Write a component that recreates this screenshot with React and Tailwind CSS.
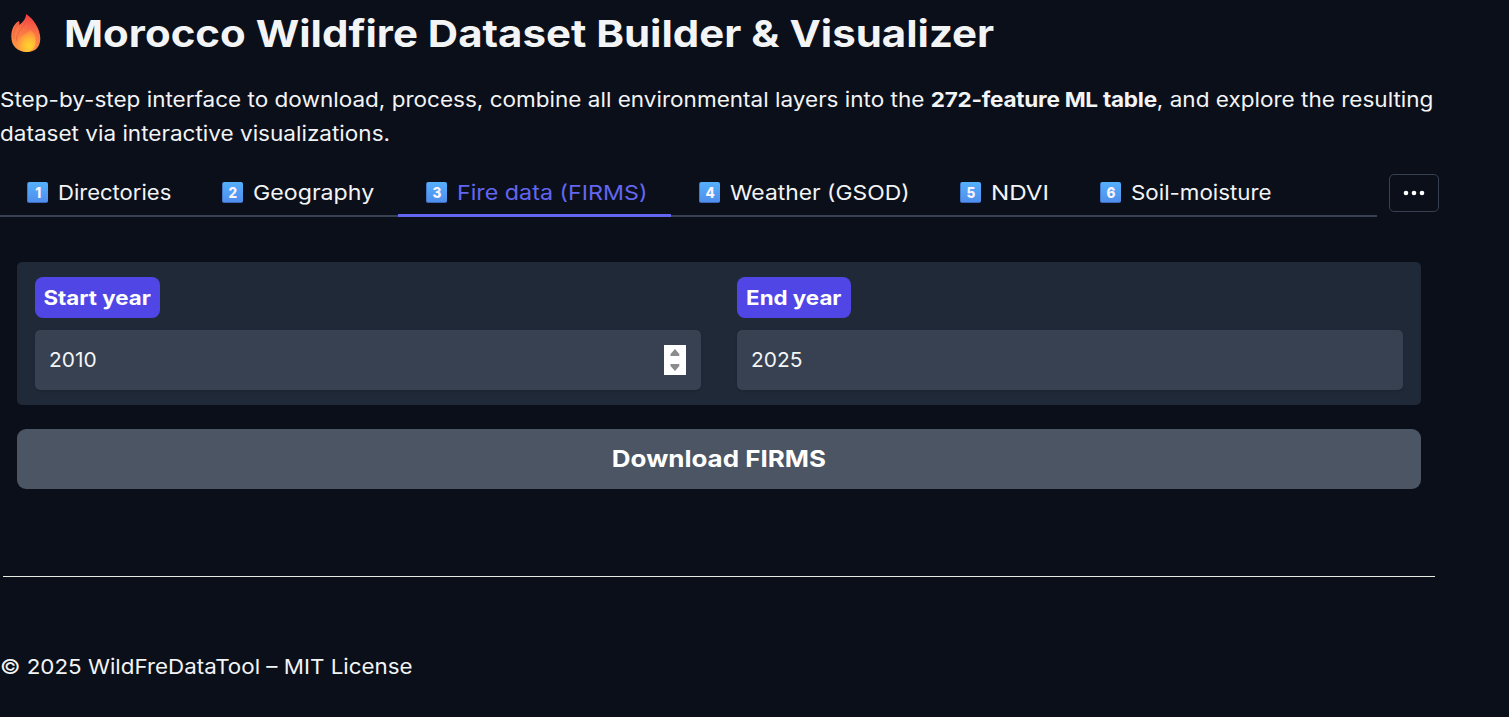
const tabs = [
  { n: '1', label: 'Directories', width: 'w-[195px]', text: 'scale-x-[1.075]' },
  { n: '2', label: 'Geography', width: 'w-[203px]', text: 'scale-x-[1.130]' },
  { n: '3', label: 'Fire data (FIRMS)', width: 'w-[273px]', text: 'scale-x-[1.135]', active: true },
  { n: '4', label: 'Weather (GSOD)', width: 'w-[261px]', text: 'scale-x-[1.115]' },
  { n: '5', label: 'NDVI', width: 'w-[140px]', text: 'scale-x-[1.180]' },
  { n: '6', label: 'Soil-moisture', width: 'w-[304px]', text: 'scale-x-[1.090]' },
];

function Flame() {
  return (
    <svg width="30" height="39" viewBox="0 0 30 39" className="mt-[14px] ml-[11px] shrink-0">
      <defs>
        <linearGradient id="flameOuter" x1="0.6" y1="0" x2="0.4" y2="1">
          <stop offset="0" stopColor="#f03a45" />
          <stop offset="0.45" stopColor="#fb7445" />
          <stop offset="1" stopColor="#fd9a45" />
        </linearGradient>
        <radialGradient id="flameInner" cx="0.65" cy="0.75" r="0.7">
          <stop offset="0" stopColor="#ffd52e" />
          <stop offset="0.5" stopColor="#ffb735" />
          <stop offset="1" stopColor="#ff8741" />
        </radialGradient>
      </defs>
      <path d="M15.2 0C22 4.500 29.300 14.500 29.300 24.500C29.300 33 24 38 16.500 38C7 38 0.300 32.500 0.300 22.500C0.300 15.500 3 9.500 8 7C8.600 8.700 8.500 9.500 8.300 11C12.500 8 15 4 15.200 0Z" fill="url(#flameOuter)" />
      <path d="M8 9C4 13 2.200 18 3.200 25M14.500 8C12.500 14 5.500 17.500 5.200 27" fill="none" stroke="#d9563b" strokeWidth="0.9" opacity="0.6" />
      <path d="M19 16C23 18 25 22.500 24.800 27C24.500 34 20.500 38 15.500 38C9.500 38 5.800 34 6 29.500C6.300 24 9.500 22.500 13 20.500C16 18.800 18.500 18 19 16Z" fill="url(#flameInner)" />
    </svg>
  );
}

function Keycap({ n }) {
  return (
    <span className="flex h-[21px] w-[21px] shrink-0 items-center justify-center rounded-[2px] border-b border-l border-b-[#4268bd] border-l-[#4379cb] bg-linear-to-b from-[#55b0fb] to-[#4f8fed] text-[15px] leading-none font-extrabold text-[#fbf4ff]">
      <span className="scale-x-90">{n}</span>
    </span>
  );
}

function Spinner() {
  return (
    <svg width="22" height="30" viewBox="0 0 22 30" className="bg-white">
      <path d="M11 4L15.300 9V11H6.500V9Z M11 26L15.300 21V19H6.500V21Z" fill="#8b8b8b" />
    </svg>
  );
}

function YearField({ label, value, spinner, labelClass }) {
  return (
    <div className="flex flex-1 flex-col items-start gap-3">
      <label className={`flex h-[41px] items-center justify-center rounded-lg bg-[#4f46e5] text-[20px] font-bold whitespace-nowrap text-white ${labelClass}`}>
        <span className="scale-x-[1.115]">{label}</span>
      </label>
      <div className="flex h-[60px] w-full items-center justify-between rounded-[5px] bg-[#374151] pr-[15px] pl-[14px] text-[20.500px] text-[#f3f4f6] shadow-sm">
        <span className="origin-left scale-x-[1.020]">{value}</span>
        {spinner && <Spinner />}
      </div>
    </div>
  );
}

export default function App() {
  return (
    <div className="h-[717px] w-full overflow-hidden bg-[#0b0f19] font-['Inter',sans-serif] text-[20.500px] text-[#f3f4f6]">
      <header className="flex h-[66px]">
        <Flame />
        <h1 className="ml-[23px] origin-left scale-x-[1.119] text-[37.500px] leading-[67px] font-bold whitespace-nowrap">
          Morocco Wildfire Dataset Builder &amp; Visualizer
        </h1>
      </header>
      <p className="h-[108px] origin-left scale-x-[1.099] pt-[17px] leading-[34px] whitespace-nowrap">
        Step-by-step interface to download, process, combine all environmental layers into the{' '}
        <strong className="font-bold tracking-[-0.230px]">272-feature ML table</strong>, and explore the resulting
        <br />
        dataset via interactive visualizations.
      </p>
      <div className="flex h-[43px]">
        <nav className="flex w-[1377px] border-b-2 border-[#374151]">
          {tabs.map((t) => (
            <button
              key={t.n}
              className={`flex h-[43px] shrink-0 items-center gap-[10px] whitespace-nowrap ${t.width} ${t.active ? 'border-b-3 border-[#6366f1] pb-[3px] pl-[28px] text-[#6366f1]' : t.n > '3' ? 'pb-[6px] pl-[28px]' : 'pb-[6px] pl-[27px]'}`}
            >
              <Keycap n={t.n} />
              <span className={`mt-[2px] origin-left ${t.text}`}>{t.label}</span>
            </button>
          ))}
        </nav>
        <button className="ml-3 flex h-[38px] w-[50px] items-center justify-center rounded-[5px] border border-[#374151]">
          <svg width="22" height="6" viewBox="0 0 22 6" fill="#ffffff">
            <circle cx="3" cy="3" r="2.300" />
            <circle cx="11" cy="3" r="2.300" />
            <circle cx="19" cy="3" r="2.300" />
          </svg>
        </button>
      </div>
      <main className="mt-[45px] ml-[17px] flex w-[1404px] flex-col gap-6">
        <section className="flex h-[143px] gap-9 rounded-[5px] bg-[#1f2937] px-[18px] pt-[15px]">
          <YearField label="Start year" value="2010" spinner labelClass="w-[125px]" />
          <YearField label="End year" value="2025" labelClass="w-[114px]" />
        </section>
        <button className="flex h-[60px] items-center justify-center rounded-[9px] bg-[#4b5563] text-[23.500px] font-bold text-white">
          <span className="scale-x-[1.105]">Download FIRMS</span>
        </button>
      </main>
      <hr className="mt-[87px] ml-[3px] w-[1432px] border-t border-[#e8ebe4]" />
      <footer className="mt-[73px] origin-left scale-x-[1.090] leading-[34px] whitespace-nowrap">© 2025 WildFreDataTool – MIT License</footer>
    </div>
  );
}
